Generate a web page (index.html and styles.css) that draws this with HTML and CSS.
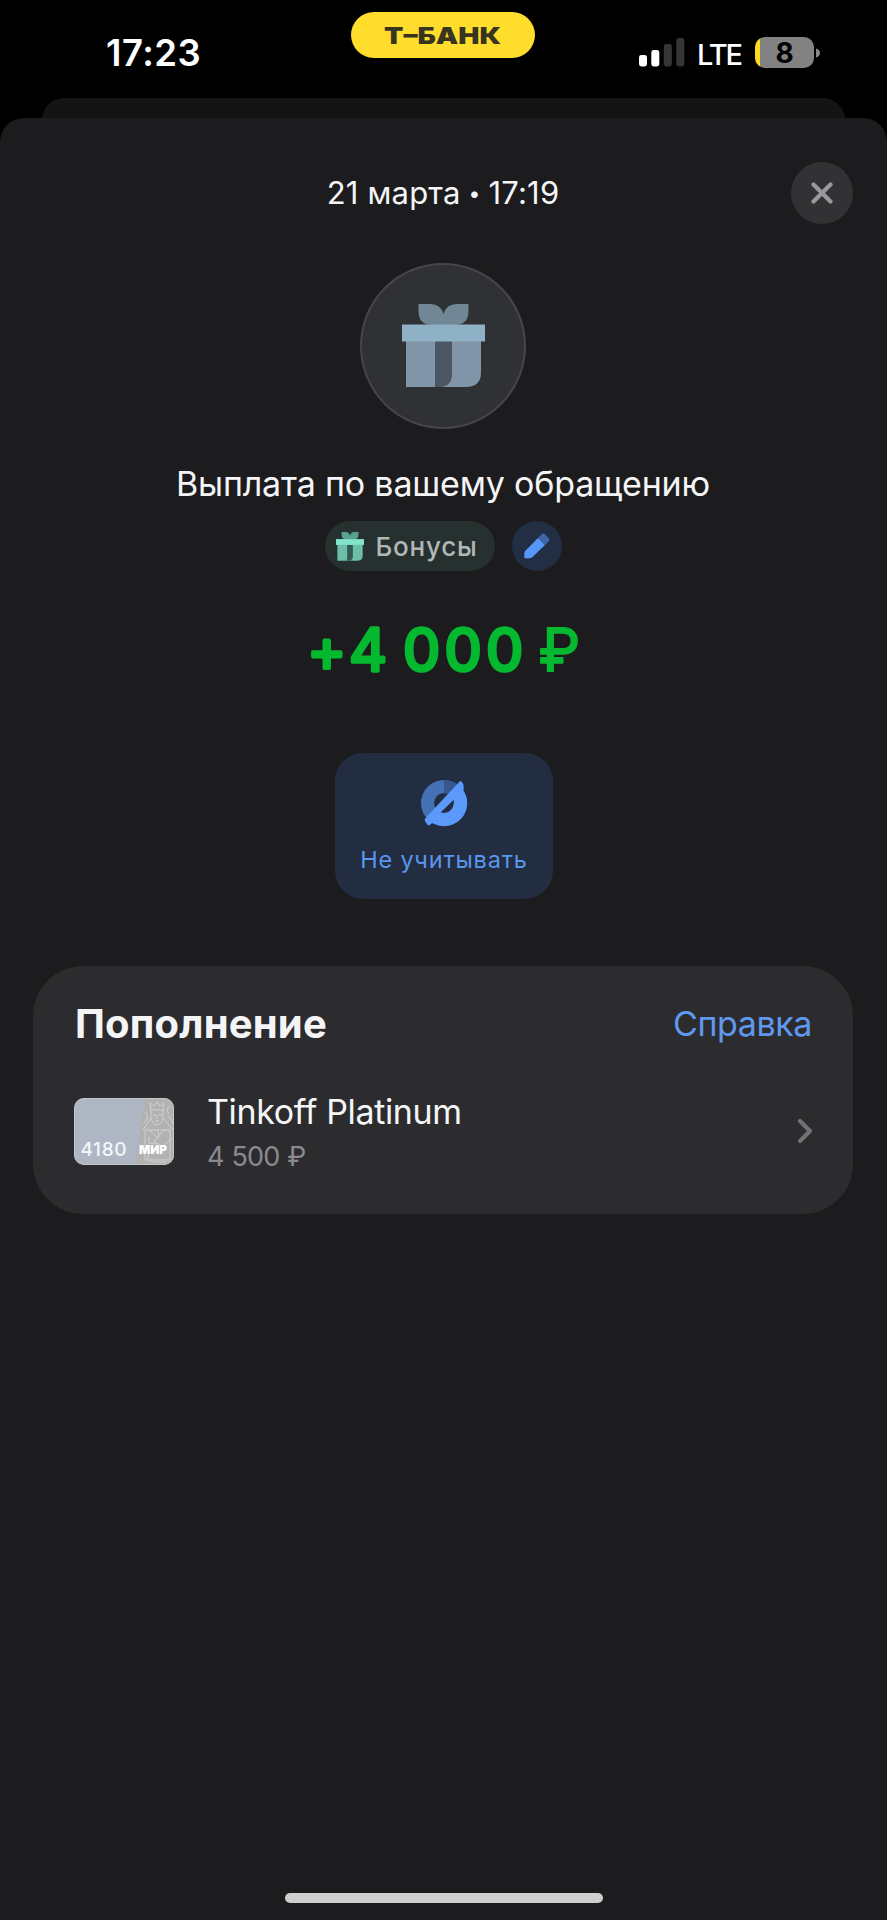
FILE: index.html
```html
<!DOCTYPE html>
<html lang="ru">
<head>
<meta charset="utf-8">
<title>Операция</title>
<link rel="stylesheet" href="styles.css">
</head>
<body>
<div class="screen">
  <header class="status">
    <div class="clock">17:23</div>
    <div class="brand">
      <svg width="130" height="36" viewBox="0 0 130 36"><text class="brand-text" x="6" y="26.500" textLength="117" lengthAdjust="spacingAndGlyphs">Т–БАНК</text></svg>
    </div>
    <div class="indicators">
      <svg class="signal" width="46" height="30" viewBox="0 0 46 30">
        <rect x="0" y="18" width="8" height="11.5" rx="2.4" fill="#fff"/>
        <rect x="12.3" y="13" width="8" height="16.5" rx="2.4" fill="#fff"/>
        <rect x="24.8" y="7" width="8" height="22.5" rx="2.4" fill="#363636"/>
        <rect x="37.3" y="1" width="8" height="28.5" rx="2.4" fill="#363636"/>
      </svg>
      <span class="lte">LTE</span>
      <div class="battery"><span class="level">8</span></div>
      <svg class="tip" width="5" height="10" viewBox="0 0 5 10"><path d="M0 .5C5.300 1.800 5.300 8.200 0 9.500Z" fill="#8a8a8a"/></svg>
    </div>
  </header>
  <div class="peek"></div>
  <main class="sheet">
    <div class="top">
      <div class="date">21 марта <span class="dot">•</span> 17:19</div>
      <button class="close" aria-label="Закрыть"><svg width="22" height="22" viewBox="0 0 22 22"><path d="M2.500 2.500 19.500 19.500M19.500 2.500 2.500 19.500" stroke="#99999c" stroke-width="4.200" stroke-linecap="round"/></svg></button>
    </div>
    <div class="avatar">
      <svg width="83" height="84" viewBox="0 0 83 84">
        <path d="M16.500 0h12q10 0 13 10Q44.500 0 54.500 0h12v7q0 14-14 14h-22q-14 0-14-14Z" fill="#718795"/>
        <path d="M4 37h75v31q0 15-15 15H4Z" fill="#8095a8"/>
        <path d="M33 37h17v33q0 13-13 13h-4Z" fill="#4c5662"/>
        <path d="M0 20.500h83v17H0Z" fill="#8fb1c5"/>
      </svg>
    </div>
    <h1 class="title">Выплата по вашему обращению</h1>
    <div class="tags">
      <div class="tag">
        <svg width="28" height="29" viewBox="0 0 83 84" preserveAspectRatio="none">
          <path d="M16.500 0h12q10 0 13 10Q44.500 0 54.500 0h12v7q0 14-14 14h-22q-14 0-14-14Z" fill="#59a28e"/>
          <path d="M4 37h75v31q0 15-15 15H4Z" fill="#6cbda9"/>
          <path d="M33 37h17v33q0 13-13 13h-4Z" fill="#34594f"/>
          <path d="M0 20.500h83v17H0Z" fill="#83e4cc"/>
        </svg>
        <span>Бонусы</span>
      </div>
      <div class="edit"><svg width="26" height="26" viewBox="0 0 26 26">
        <path d="M14 5 21 12 8 24.500Q7 25.300 5.500 25.300H1.200Q.3 25.300.3 24.400V20.500Q.3 19 1.400 17.800Z" fill="#5797fb"/>
        <path d="M14 5 17.800 1.200Q19.300-.2 20.800 1.200L24.800 5.200Q26 6.700 24.800 8.100L21 12Z" fill="#4068a8"/>
      </svg></div>
    </div>
    <svg class="amount" width="300" height="90" viewBox="0 0 300 90">
      <text class="amount-text" x="33.700 75 101 128.500 170 211.700 240 266.500" y="66">+4 000 <tspan class="currency">₽</tspan></text>
    </svg>
    <button class="action">
      <svg width="48" height="48" viewBox="0 0 48 48">
        <path d="M24 1a23 23 0 1 0 0 46A23 23 0 0 0 24 1Zm0 13a10 10 0 1 1 0 20 10 10 0 0 1 0-20Z" fill="#4571b7" fill-rule="evenodd"/>
        <path d="M24 1A23 23 0 0 1 38 5.800L29 15.200A10 10 0 0 0 24 14Z" fill="#36568d"/>
        <path d="M5.200 39.500 39.300 2.800Q41 1.300 42 3.300 44.500 5.500 43.400 11.500A23 23 0 0 1 13.500 44.500Q12 43.800 10.800 45 8.700 47.500 7.500 45.500 3.500 42 5.200 39.500ZM34 20.500 20.500 33.500Q25 35 29.500 32.400 34.500 28.500 34 20.500Z" fill="#5b99fb" fill-rule="evenodd"/>
      </svg>
      <span>Не учитывать</span>
    </button>
    <section class="card">
      <div class="card-head"><h2>Пополнение</h2><a class="help">Справка</a></div>
      <div class="account">
        <svg class="thumb" width="100" height="67" viewBox="0 0 100 67">
          <defs><clipPath id="thumb-shape"><rect width="100" height="67" rx="10"/></clipPath></defs>
          <g clip-path="url(#thumb-shape)">
            <rect width="100" height="67" fill="#afb7c5"/>
            <path d="M71 0H100V67H60Q64 50 66 32 68 14 71 0Z" fill="#b2b2b2"/>
            <g fill="none" stroke="#d0d0d0" stroke-width="1">
              <path d="M77 12 76 5l4 3 3-4 3 4 4-3-1 7ZM77 12v8q1 6 6 7 5-1 6-7v-8M79 17h3M85 17h3M83 17v4M81 23h4M77 20l-5 7-3 5M89 20l6 7 4 5M71 32h25v30H71ZM75 32l8 7 8-7M84 33l1 6-5 4 6 4M75 39v6l8 1M71 14q6 5-2 12M96 8q-5 3-1 8M94 18q5 5 6 10M75 56q-4 6 3 8h14M90 47l8-7"/>
            </g>
            <rect width="99" height="66" x=".5" y=".5" rx="9.500" fill="none" stroke="#c4c6ca"/>
            <text class="thumb-num" x="6.500" y="58" textLength="46">4180</text>
            <text class="thumb-mir" x="65" y="56" textLength="28" lengthAdjust="spacingAndGlyphs">МИР</text>
          </g>
        </svg>
        <div class="info">
          <div class="name">Tinkoff Platinum</div>
          <div class="balance">4 500 ₽</div>
        </div>
        <svg class="chevron" width="16" height="26" viewBox="0 0 16 26"><path d="M3 3 13 13 3 23" fill="none" stroke="#727274" stroke-width="4.200" stroke-linecap="round" stroke-linejoin="round"/></svg>
      </div>
    </section>
    <div class="home"></div>
  </main>
</div>
</body>
</html>
```
FILE: styles.css
```css
* { box-sizing: border-box; }
body { margin: 0; background: #000; color: #f5f5f7; font-family: Inter, "Liberation Sans", sans-serif; }
h1, h2 { margin: 0; font-weight: 400; }
button { border: 0; padding: 0; font: inherit; }
svg { display: block; flex: none; }
.screen { width: 887px; height: 1920px; display: flex; flex-direction: column; overflow: hidden; }
.status { height: 98px; flex: none; display: grid; grid-template-columns: 351px 184px 1fr; align-items: start; }
.clock { margin: 33px 0 0 106px; font-size: 36.500px; line-height: 40px; font-weight: 600; letter-spacing: .5px; color: #fff; }
.brand { margin-top: 12px; height: 46px; border-radius: 23px; background: #ffdd2d; display: flex; align-items: center; justify-content: center; }
.brand-text { font-size: 23px; font-weight: 900; fill: #37341f; }
.indicators { display: flex; align-items: center; margin: 37px 0 0 104px; height: 31px; }
.signal { margin-top: -1px; }
.lte { margin-left: 12px; width: 58px; font-size: 29px; line-height: 31px; font-weight: 500; color: #fff; letter-spacing: -2px; padding-top: 3px; }
.battery { width: 59px; height: 31px; border-radius: 10px; background: linear-gradient(90deg, #ffd91f 5.500px, #828282 5.500px); text-align: center; }
.level { display: block; font-size: 28px; line-height: 32px; font-weight: 700; color: #000; }
.tip { margin-left: 2px; }
.peek { flex: none; height: 46px; margin: 0 42px -26px; background: #141414; border-radius: 22px 22px 0 0; }
.sheet { flex: 1; background: #1c1c1e; border-radius: 24px 24px 0 0; display: flex; flex-direction: column; align-items: center; padding: 44px 34px 17px 33px; position: relative; }
.top { width: 100%; height: 62px; display: grid; grid-template-columns: 1fr auto 1fr; align-items: center; }
.date { grid-column: 2; height: 62px; font-size: 31px; line-height: 62px; white-space: nowrap; letter-spacing: .2px; }
.dot { font-size: 21px; line-height: 1; vertical-align: 3px; margin: 0 -1px; }
.close { justify-self: end; width: 62px; height: 62px; border-radius: 50%; background: #323234; display: grid; place-items: center; }
.avatar { margin-top: 39px; width: 166px; height: 166px; border-radius: 50%; background: #303135; border: 2px solid #464648; display: grid; place-items: center; }
.title { margin-top: 33px; font-size: 34px; line-height: 44px; white-space: nowrap; letter-spacing: -.18px; }
.tags { display: flex; gap: 17px; margin-top: 15px; }
.tag { width: 170px; height: 50px; border-radius: 25px; background: #26302e; display: flex; align-items: center; padding-left: 11px; gap: 12px; font-size: 26px; font-weight: 500; letter-spacing: .8px; color: #b1b7b6; }
.edit { width: 50px; height: 50px; border-radius: 50%; background: #222e44; display: grid; place-items: center; }
.amount { margin-top: 34px; }
.amount-text { font-size: 59px; font-weight: 400; text-anchor: middle; fill: #04b92f; stroke: #04b92f; stroke-width: 3.600px; stroke-linejoin: round; }
.currency { stroke-width: 1.800px; }
.action { margin: 58px 0 0 2px; width: 218px; height: 146px; border-radius: 28px; background: #222d41; display: flex; flex-direction: column; align-items: center; padding-top: 26px; color: #5b95ec; font-size: 23.500px; line-height: 30px; letter-spacing: .8px; gap: 18px; }
.card { margin-top: 67px; width: 820px; height: 248px; border-radius: 50px; background: #2c2c2e; padding: 38px 41px 0 41px; }
.card-head { display: flex; justify-content: space-between; line-height: 40px; padding-left: 1px; }
.card-head h2 { font-size: 40px; font-weight: 700; letter-spacing: .2px; }
.help { font-size: 34px; letter-spacing: -.4px; color: #6098f0; }
.account { display: flex; align-items: center; margin: 40px -1px 0 0; height: 94px; }
.thumb-num { font-size: 19px; font-weight: 500; fill: #f4f6fa; }
.thumb-mir { font-size: 12px; font-weight: 900; fill: #fff; }
.info { margin: 7px auto 0 33px; }
.name { font-size: 34px; line-height: 44px; letter-spacing: -.35px; }
.balance { font-size: 27px; line-height: 46px; letter-spacing: -.8px; word-spacing: 1px; color: #8a8a8e; }
.home { margin: auto 0 0 1px; width: 318px; height: 10px; border-radius: 5px; background: #cfcfcf; }
```
